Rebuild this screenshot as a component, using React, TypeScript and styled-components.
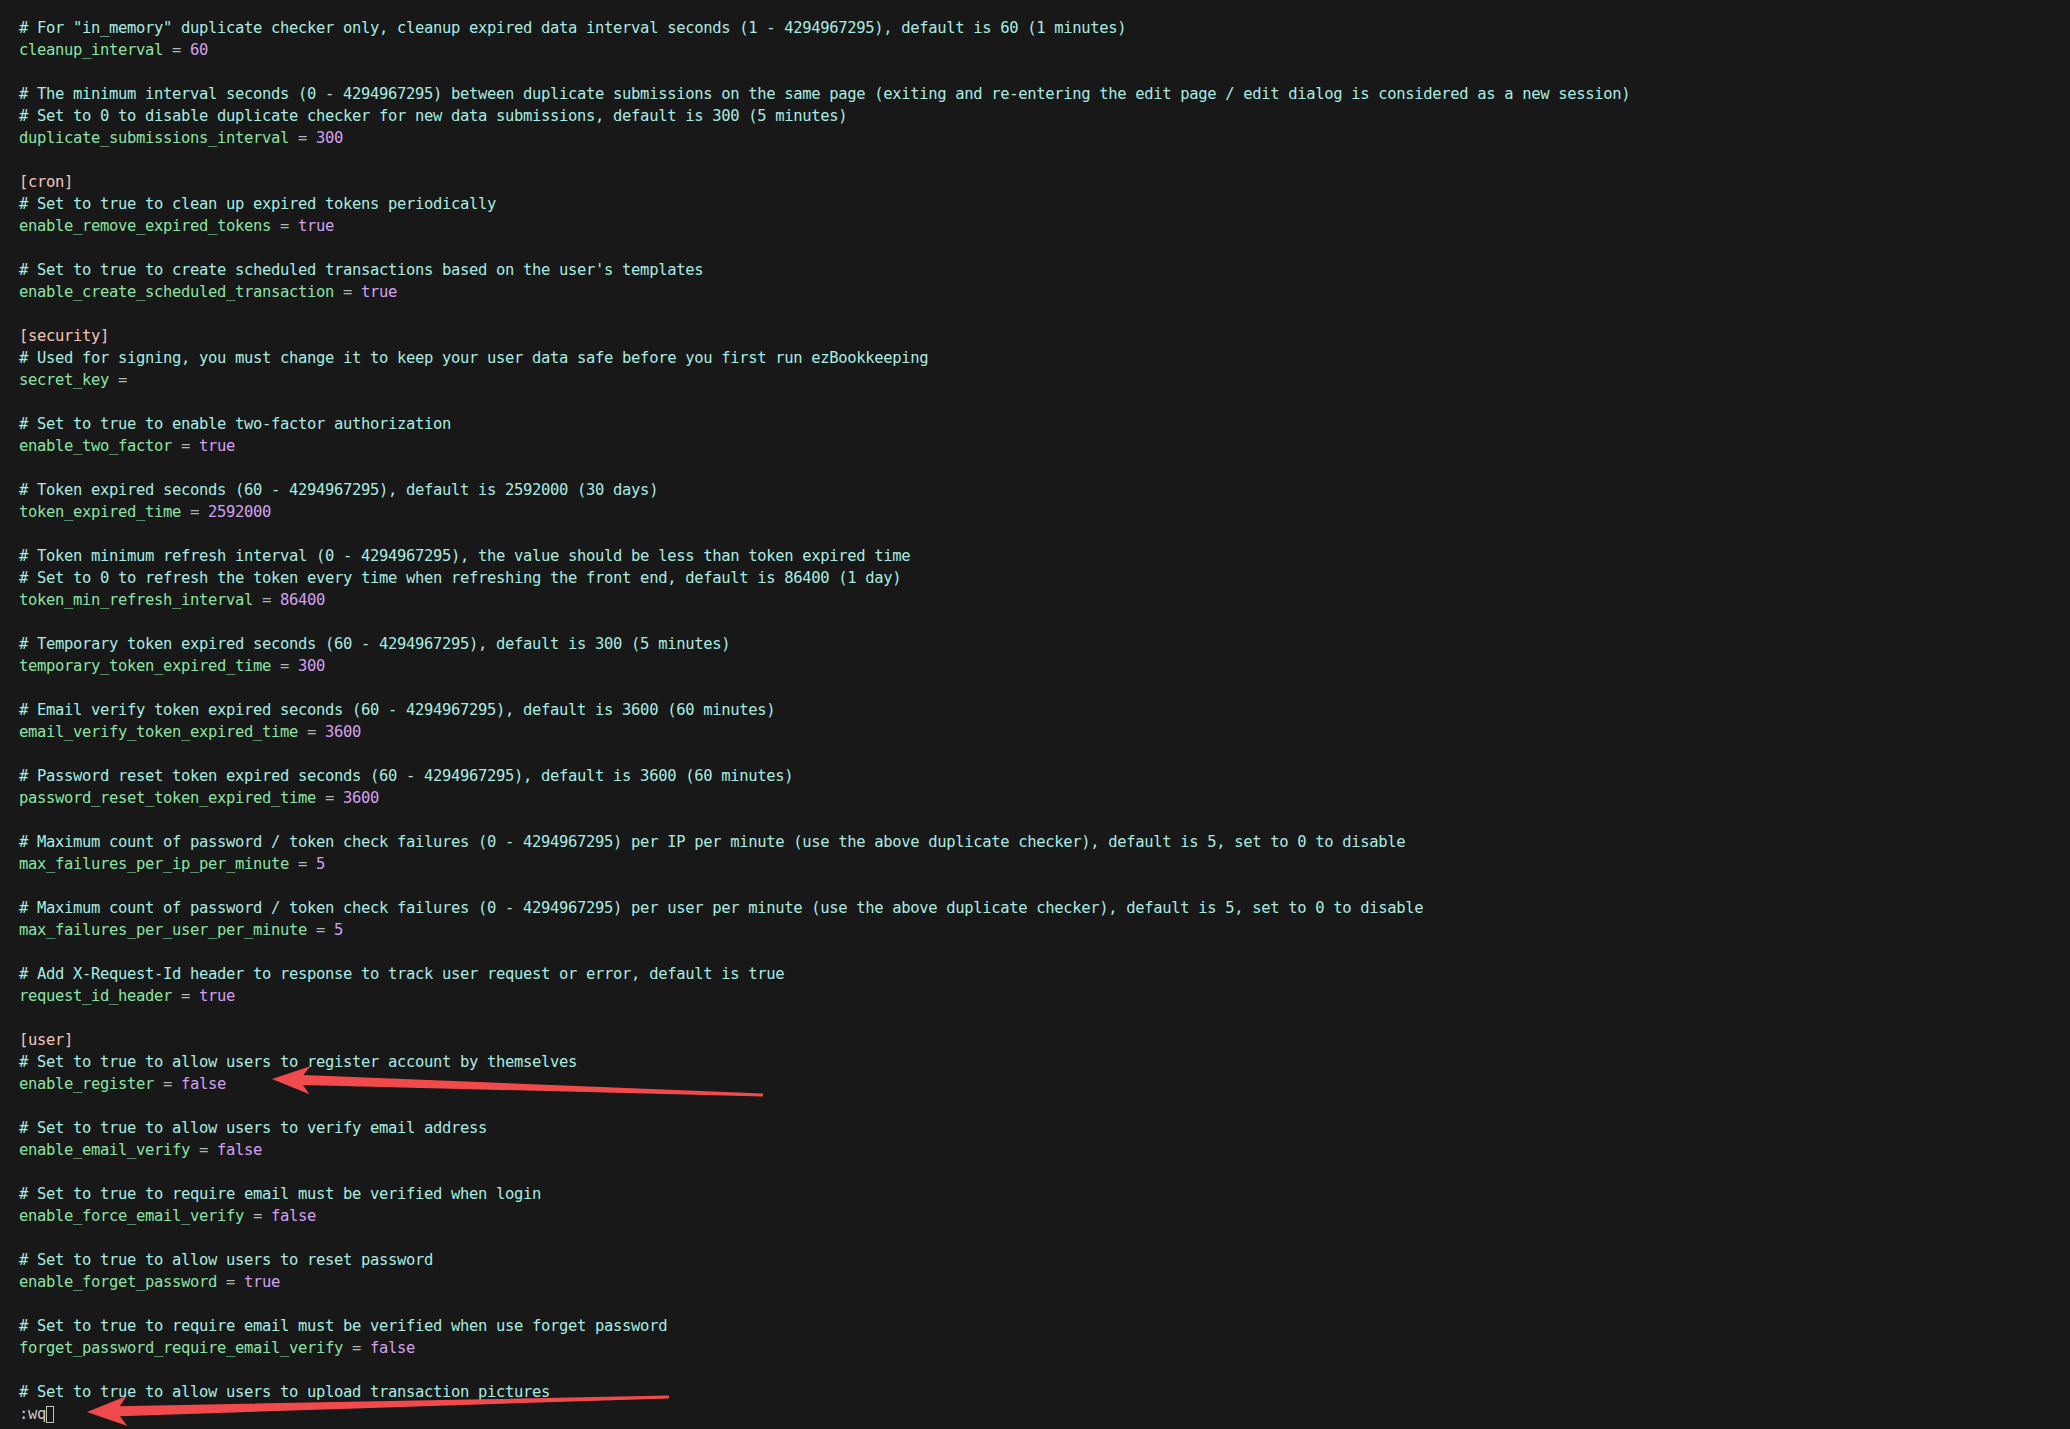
import React from "react";
import styled, { createGlobalStyle } from "styled-components";

const Global = createGlobalStyle`
  html, body { margin: 0; padding: 0; background: #181818; }
  body { width: 2070px; height: 1429px; overflow: hidden; }
`;

const Screen = styled.div`
  position: relative;
  width: 2070px;
  height: 1429px;
  background: #181818;
  box-sizing: border-box;
  padding: 17px 0 0 19px;
  font-family: "DejaVu Sans Mono", "Liberation Mono", monospace;
  font-size: 15.5px;
  letter-spacing: -0.33px;
  overflow: hidden;
`;

const Line = styled.div`
  height: 22px;
  line-height: 22px;
  white-space: pre;
`;

const Comment = styled.span`
  color: #a8ebe1;
`;
const Key = styled.span`
  color: #8be3a3;
`;
const Eq = styled.span`
  color: #aebab6;
`;
const Value = styled.span`
  color: #d3a0ef;
`;
const Section = styled.span`
  color: #f2c5ba;
`;
const Cmd = styled.span`
  color: #c8c8c8;
`;
const Cursor = styled.span`
  display: inline-block;
  width: 8px;
  height: 17px;
  border: 1px solid #c4c4c4;
  box-sizing: border-box;
  vertical-align: -4px;
`;

const Overlay = styled.svg`
  position: absolute;
  left: 0;
  top: 0;
  pointer-events: none;
`;

type L =
  | { t: "c"; s: string }
  | { t: "k"; k: string; v?: string }
  | { t: "s"; s: string }
  | { t: "b" }
  | { t: "cmd" };

const lines: L[] = [
  { t: "c", s: '# For "in_memory" duplicate checker only, cleanup expired data interval seconds (1 - 4294967295), default is 60 (1 minutes)' },
  { t: "k", k: "cleanup_interval", v: "60" },
  { t: "b" },
  { t: "c", s: "# The minimum interval seconds (0 - 4294967295) between duplicate submissions on the same page (exiting and re-entering the edit page / edit dialog is considered as a new session)" },
  { t: "c", s: "# Set to 0 to disable duplicate checker for new data submissions, default is 300 (5 minutes)" },
  { t: "k", k: "duplicate_submissions_interval", v: "300" },
  { t: "b" },
  { t: "s", s: "[cron]" },
  { t: "c", s: "# Set to true to clean up expired tokens periodically" },
  { t: "k", k: "enable_remove_expired_tokens", v: "true" },
  { t: "b" },
  { t: "c", s: "# Set to true to create scheduled transactions based on the user's templates" },
  { t: "k", k: "enable_create_scheduled_transaction", v: "true" },
  { t: "b" },
  { t: "s", s: "[security]" },
  { t: "c", s: "# Used for signing, you must change it to keep your user data safe before you first run ezBookkeeping" },
  { t: "k", k: "secret_key" },
  { t: "b" },
  { t: "c", s: "# Set to true to enable two-factor authorization" },
  { t: "k", k: "enable_two_factor", v: "true" },
  { t: "b" },
  { t: "c", s: "# Token expired seconds (60 - 4294967295), default is 2592000 (30 days)" },
  { t: "k", k: "token_expired_time", v: "2592000" },
  { t: "b" },
  { t: "c", s: "# Token minimum refresh interval (0 - 4294967295), the value should be less than token expired time" },
  { t: "c", s: "# Set to 0 to refresh the token every time when refreshing the front end, default is 86400 (1 day)" },
  { t: "k", k: "token_min_refresh_interval", v: "86400" },
  { t: "b" },
  { t: "c", s: "# Temporary token expired seconds (60 - 4294967295), default is 300 (5 minutes)" },
  { t: "k", k: "temporary_token_expired_time", v: "300" },
  { t: "b" },
  { t: "c", s: "# Email verify token expired seconds (60 - 4294967295), default is 3600 (60 minutes)" },
  { t: "k", k: "email_verify_token_expired_time", v: "3600" },
  { t: "b" },
  { t: "c", s: "# Password reset token expired seconds (60 - 4294967295), default is 3600 (60 minutes)" },
  { t: "k", k: "password_reset_token_expired_time", v: "3600" },
  { t: "b" },
  { t: "c", s: "# Maximum count of password / token check failures (0 - 4294967295) per IP per minute (use the above duplicate checker), default is 5, set to 0 to disable" },
  { t: "k", k: "max_failures_per_ip_per_minute", v: "5" },
  { t: "b" },
  { t: "c", s: "# Maximum count of password / token check failures (0 - 4294967295) per user per minute (use the above duplicate checker), default is 5, set to 0 to disable" },
  { t: "k", k: "max_failures_per_user_per_minute", v: "5" },
  { t: "b" },
  { t: "c", s: "# Add X-Request-Id header to response to track user request or error, default is true" },
  { t: "k", k: "request_id_header", v: "true" },
  { t: "b" },
  { t: "s", s: "[user]" },
  { t: "c", s: "# Set to true to allow users to register account by themselves" },
  { t: "k", k: "enable_register", v: "false" },
  { t: "b" },
  { t: "c", s: "# Set to true to allow users to verify email address" },
  { t: "k", k: "enable_email_verify", v: "false" },
  { t: "b" },
  { t: "c", s: "# Set to true to require email must be verified when login" },
  { t: "k", k: "enable_force_email_verify", v: "false" },
  { t: "b" },
  { t: "c", s: "# Set to true to allow users to reset password" },
  { t: "k", k: "enable_forget_password", v: "true" },
  { t: "b" },
  { t: "c", s: "# Set to true to require email must be verified when use forget password" },
  { t: "k", k: "forget_password_require_email_verify", v: "false" },
  { t: "b" },
  { t: "c", s: "# Set to true to allow users to upload transaction pictures" },
  { t: "cmd" },
];

function renderLine(l: L, i: number) {
  switch (l.t) {
    case "c":
      return <Line key={i}><Comment>{l.s}</Comment></Line>;
    case "s":
      return <Line key={i}><Section>{l.s}</Section></Line>;
    case "k":
      return (
        <Line key={i}>
          <Key>{l.k}</Key>
          <Eq>{" ="}</Eq>
          {l.v !== undefined && <Value>{" " + l.v}</Value>}
        </Line>
      );
    case "cmd":
      return (
        <Line key={i}>
          <Cmd>:wq</Cmd>
          <Cursor />
        </Line>
      );
    default:
      return <Line key={i}>{" "}</Line>;
  }
}

function arrowPoints(
  tip: [number, number],
  tail: [number, number],
  headLen: number,
  headHalf: number,
  shaftHalf: number,
  tailHalf: number
) {
  const dx = tail[0] - tip[0];
  const dy = tail[1] - tip[1];
  const len = Math.hypot(dx, dy);
  const ux = dx / len;
  const uy = dy / len;
  const px = -uy;
  const py = ux;
  const at = (d: number, o: number) =>
    `${(tip[0] + ux * d + px * o).toFixed(1)},${(tip[1] + uy * d + py * o).toFixed(1)}`;
  const notch = headLen * 0.82;
  return [
    at(0, 0),
    at(headLen, -headHalf),
    at(notch, -shaftHalf),
    at(len, -tailHalf),
    at(len, tailHalf),
    at(notch, shaftHalf),
    at(headLen, headHalf),
  ].join(" ");
}

export default function App() {
  return (
    <>
      <Global />
      <Screen>
        {lines.map(renderLine)}
        <Overlay width={2070} height={1429} viewBox="0 0 2070 1429">
          <polygon
            points={arrowPoints([272, 1079], [763, 1095], 38, 14, 5, 1.4)}
            fill="#f04a4d"
          />
          <polygon
            points={arrowPoints([87, 1412], [669, 1397], 40, 15, 5, 1.4)}
            fill="#f04a4d"
          />
        </Overlay>
      </Screen>
    </>
  );
}
